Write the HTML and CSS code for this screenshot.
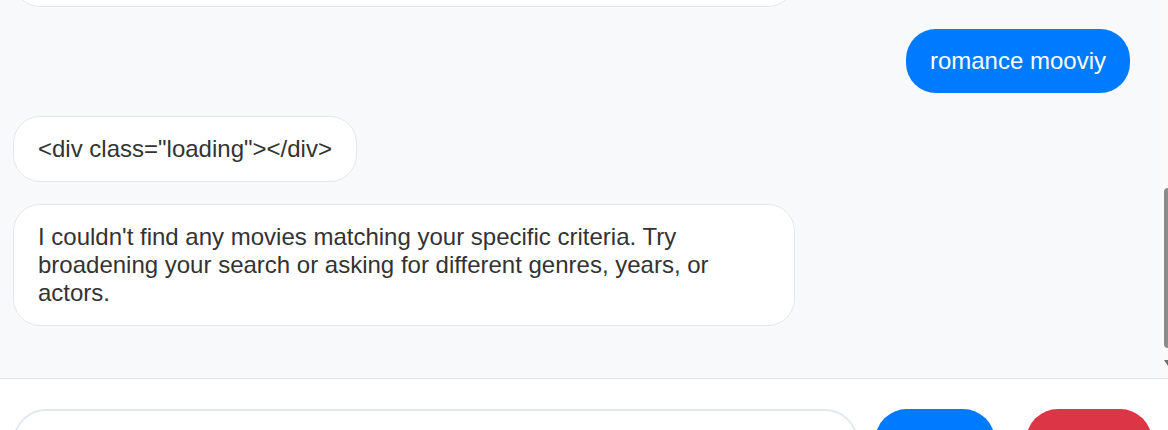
FILE: index.html
```html
<!DOCTYPE html>
<html lang="en">
<head>
<meta charset="utf-8">
<title>Movie Chat</title>
<link rel="stylesheet" href="styles.css">
</head>
<body>
<div class="app">
  <div class="messages-wrap">
    <div class="messages">
      <div class="thread">
        <div class="bubble bot">Hello! I'm your movie assistant. Ask me for recommendations by genre, year, or actor.</div>
        <div class="bubble user">action movies</div>
        <div class="bubble bot">Here are some action movies you might enjoy:<br>1. Mad Max: Fury Road (2015)<br>2. John Wick (2014)<br>3. The Dark Knight (2008)<br>4. Die Hard (1988)<br>Would you like more details about any of these films, or should I search for something in a different genre or decade instead?</div>
        <div class="bubble user">romance mooviy</div>
        <div class="bubble bot">&lt;div class="loading"&gt;&lt;/div&gt;</div>
        <div class="bubble bot">I couldn't find any movies matching your specific criteria. Try broadening your search or asking for different genres, years, or actors.</div>
      </div>
    </div>
    <div class="scrollbar" aria-hidden="true">
      <div class="scroll-thumb"></div>
      <div class="scroll-arrow"></div>
    </div>
  </div>
  <form class="composer">
    <input class="composer-input" type="text" placeholder="Ask about movies...">
    <button class="btn btn-send" type="button">Send</button>
    <button class="btn btn-reset" type="button">Reset</button>
  </form>
</div>
</body>
</html>
```
FILE: styles.css
```css
* { box-sizing: border-box; }

html, body {
  margin: 0;
  height: 100%;
  overflow: hidden;
}

body {
  font-family: "Liberation Sans", Arial, sans-serif;
  font-size: 24px;
  color: #333;
  background: #ffffff;
}

.app {
  display: flex;
  flex-direction: column;
}

.messages-wrap {
  position: relative;
  height: 378px;
  flex: none;
  background: #f8f9fa;
}

.messages {
  height: 100%;
  overflow-y: auto;
  display: flex;
  flex-direction: column-reverse;
}

.thread {
  display: flex;
  flex-direction: column;
  gap: 22.5px;
  padding: 23px 38px 52px 13px;
}

.bubble {
  max-width: 70%;
  padding: 18px 24px;
  border-radius: 27px;
  line-height: 28px;
}

.bot {
  align-self: flex-start;
  background: #ffffff;
  border: 1px solid #e3e7ed;
}

.user {
  align-self: flex-end;
  background: #007bff;
  color: #ffffff;
  border-radius: 30px;
}

/* scrollbar drawn over the right edge of the message list */
.scrollbar {
  position: absolute;
  top: 0;
  right: 0;
  bottom: 0;
  width: 8px;
  background: #fafafa;
}

.scroll-thumb {
  position: absolute;
  top: 188px;
  left: 4px;
  right: 0;
  height: 160px;
  background: #8b8b8b;
  border-radius: 4px 0 0 4px;
}

.scroll-arrow {
  position: absolute;
  top: 360px;
  left: 4px;
  width: 0;
  height: 0;
  border-left: 4px solid transparent;
  border-right: 4px solid transparent;
  border-top: 6px solid #6f6f6f;
}

.composer {
  margin: 0;
  display: flex;
  align-items: flex-start;
  padding: 30px 16px 30px 13px;
  border-top: 1px solid #dee2e6;
  background: #ffffff;
}

.composer-input {
  flex: 1;
  min-width: 0;
  margin-right: 17px;
  padding: 18px 24px;
  border: 2px solid #e2e8f0;
  border-radius: 33px;
  font-family: inherit;
  font-size: 24px;
  color: #333;
  background: #ffffff;
  outline: none;
}

.btn {
  flex: none;
  padding: 18px 0;
  border: none;
  border-radius: 33px;
  font-family: inherit;
  font-size: 24px;
  line-height: 28px;
  color: #ffffff;
  text-align: center;
  cursor: pointer;
}

.btn-send {
  width: 120px;
  background: #007bff;
}

.btn-reset {
  width: 126px;
  margin-left: 31px;
  background: #dc3545;
}
```
